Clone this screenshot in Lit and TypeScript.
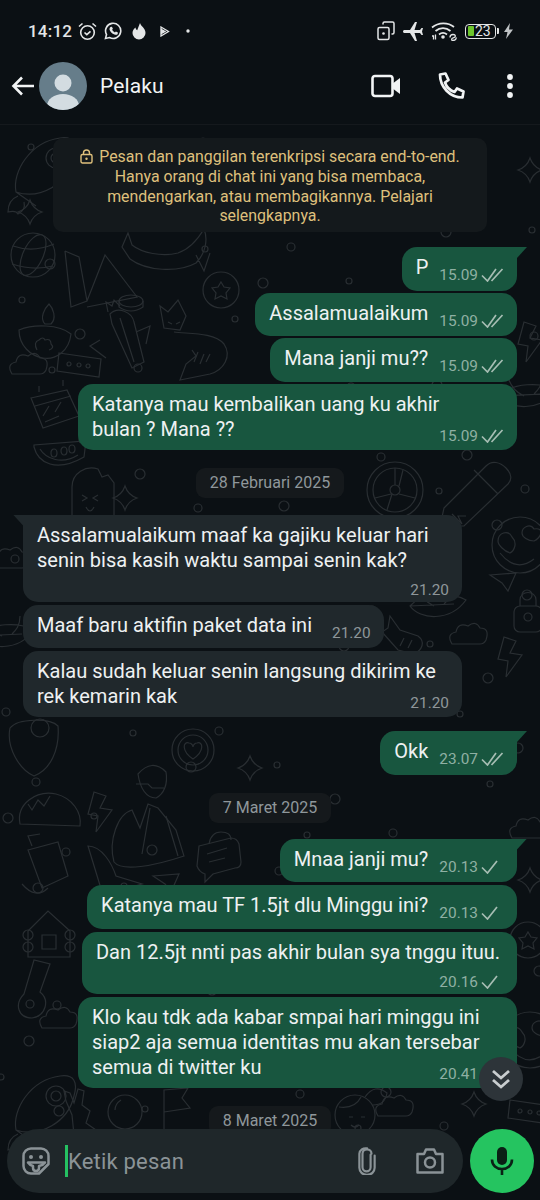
import { LitElement, html, css, svg } from 'lit';
import { customElement } from 'lit/decorators.js';

type Msg = {
  kind: 'msg';
  side: 'out' | 'in';
  lines: string[];
  time: string;
  ticks?: 1 | 2;
  layout: 'inline' | 'over' | 'stack';
  tail?: boolean;
  wide?: boolean;
  top: number;
};
type Day = { kind: 'day'; label: string; top: number };

const ITEMS: (Msg | Day)[] = [
  { kind: 'msg', side: 'out', lines: ['P'], time: '15.09', ticks: 2, layout: 'inline', tail: true, top: 15 },
  { kind: 'msg', side: 'out', lines: ['Assalamualaikum'], time: '15.09', ticks: 2, layout: 'inline', top: 2 },
  { kind: 'msg', side: 'out', lines: ['Mana janji mu??'], time: '15.09', ticks: 2, layout: 'inline', top: 2 },
  { kind: 'msg', side: 'out', lines: ['Katanya mau kembalikan uang ku akhir', 'bulan ? Mana ??'], time: '15.09', ticks: 2, layout: 'over', wide: true, top: 2 },
  { kind: 'day', label: '28 Februari 2025', top: 18 },
  { kind: 'msg', side: 'in', lines: ['Assalamualaikum maaf ka gajiku keluar hari', 'senin bisa kasih waktu sampai senin kak?'], time: '21.20', layout: 'stack', tail: true, wide: true, top: 17 },
  { kind: 'msg', side: 'in', lines: ['Maaf baru aktifin paket data ini'], time: '21.20', layout: 'inline', top: 3 },
  { kind: 'msg', side: 'in', lines: ['Kalau sudah keluar senin langsung dikirim ke', 'rek kemarin kak'], time: '21.20', layout: 'over', wide: true, top: 3 },
  { kind: 'msg', side: 'out', lines: ['Okk'], time: '23.07', ticks: 2, layout: 'inline', tail: true, top: 14 },
  { kind: 'day', label: '7 Maret 2025', top: 18 },
  { kind: 'msg', side: 'out', lines: ['Mnaa janji mu?'], time: '20.13', ticks: 1, layout: 'inline', tail: true, top: 16 },
  { kind: 'msg', side: 'out', lines: ['Katanya mau TF 1.5jt dlu Minggu ini?'], time: '20.13', ticks: 1, layout: 'inline', top: 3 },
  { kind: 'msg', side: 'out', lines: ['Dan 12.5jt nnti pas akhir bulan sya tnggu ituu.'], time: '20.16', ticks: 1, layout: 'stack', top: 3 },
  { kind: 'msg', side: 'out', lines: ['Klo kau tdk ada kabar smpai hari minggu ini', 'siap2 aja semua identitas mu akan tersebar', 'semua di twitter ku'], time: '20.41', ticks: 1, layout: 'over', wide: true, top: 3 },
  { kind: 'day', label: '8 Maret 2025', top: 18 },
];

// wallpaper doodles, drawn around their own 0,0
const DOODLES: Record<string, ReturnType<typeof svg>> = {
  globe: svg`<circle r="22"/><ellipse rx="10" ry="22" transform="rotate(25)"/><path d="M-20-9Q0-2 21-11M-21 9Q0 16 20 11"/>`,
  whale: svg`<path d="M-48-8l6-14 4 12c10 8 30 12 46 8 12-4 20-14 26-24 4 10 2 24-8 34-18 10-50 8-66-4z M26 0l8 16 6-18"/>`,
  party: svg`<path d="M-30-34L-24 22-8 16 10-30 42 12-8 22M-8 16L-16-28-30-34"/><ellipse cx="36" cy="16" rx="12" ry="6"/><path d="M24 16v6q12 8 24 0v-6"/>`,
  coin: svg`<circle r="18"/><path d="M0-8l3 5 6 1-4 5 1 6-6-3-6 3 1-6-4-5 6-1z"/>`,
  fox: svg`<path d="M-30-24l8 6 10-12 8 16-6 14-16-2zM-16 2c14 2 40 0 50 12 8 12 0 26-14 30l-30 6 6-16 10-8-4-6"/><path d="M4 32l4-10M10 34l4-10M16 32l4-8M-22-8l4 2M-10-8l-4 2"/>`,
  diya: svg`<path d="M-26-8c14-6 40-6 52 4-2 18-16 26-28 24C-14 18-26 8-26-8z"/><path d="M0-14c-6-6 0-16 4-20 4 4 8 14 2 20zM-8 12q-4-8 2-10 4-4 6 0 6-2 6 4 4 4-2 6"/>`,
  cactus: svg`<path d="M-12-28c8-8 22-2 24 8l10 40-12 6-20-44zM-22-2l-10 6 16 12M14-10l14-6-4 18"/><path d="M-2-24l14 44M-14-30l-2-10 6 4 2-6 6 6"/>`,
  box: svg`<path d="M-20-12l42 6-2 18-42-6z"/><circle cx="-10" cy="-1" r="2"/><circle cx="0" cy="0" r="2"/><circle cx="9" cy="1" r="2"/>`,
  cloud: svg`<path d="M-18 8q-6-10 4-12 2-10 12-6 8-6 12 2 10 0 6 12-2 4-6 4h-24q-2 0-4 0z"/>`,
  calendar: svg`<path d="M-24-14l36-8 12 26-36 12zM-16-20v-6M8-26v-6M-20-6l36-10"/><path d="M-12 4l6-10M0 0l6-10M-10 10l14-6"/>`,
  melon: svg`<path d="M-26-8c4 16 22 26 50 10l2-16-52 4z"/><path d="M-20-6c6 10 22 16 38 6"/><ellipse cx="-6" cy="-2" rx="3" ry="4"/><ellipse cx="4" cy="-4" rx="3" ry="4"/><ellipse cx="12" cy="-6" rx="3" ry="4"/>`,
  ghost: svg`<path d="M-20 40V-8c0-14 14-22 26-18l4 8 6-2 6 8v46"/><path d="M-10 0l5 3-5 3M6 0l-5 3 5 3M-6 12q4 8 8 0"/>`,
  star: svg`<path d="M0-12q3 9 12 12-9 3-12 12-3-9-12-12 9-3 12-12z"/>`,
  wheel: svg`<circle r="28"/><circle r="22"/><circle r="5"/><path d="M0-22v17M-20 8l16-4M20 8l-16-4M-8 20l5-16M8-20l-4 16"/>`,
  pencil: svg`<path d="M-34 20l42-42c6-6 14-4 20 2s6 12 2 16l-44 42-24 0z M-4-18l24 24M-26 26l10 10-4-8 8 0"/>`,
  smiley: svg`<circle r="28"/><path d="M-20 8q16 20 34 6"/><path d="M-8-8c-4-8-14-4-14 4 0 4 6 10 12 12 4-2 8-10 2-16zM14-16c-4-6-12-2-12 4 0 4 6 8 12 8 6-2 12-14 0-12z"/>`,
  bolt: svg`<path d="M-6-18l12 4-6 12 12 2-16 22 2-16-10-2z"/>`,
  lock: svg`<rect x="-14" y="-6" width="28" height="26" rx="6"/><path d="M-8-6v-6c0-10 16-10 16 0v6"/><circle cy="5" r="4"/>`,
  plane: svg`<path d="M-12-6l26-2-8 18-6-8z"/>`,
  leaf: svg`<path d="M-28-4c10 14 40 16 56-6-14-8-44-8-56 6zM-28-4l44-2M-20-22c4 10 8 14 16 18M14-24c0 10-4 14-8 18"/>`,
  hand: svg`<path d="M-18-24l10 14 18 6c8 6 4 14-4 18l-16-4-16-18 6-4z M-4-2l-4 8M4 0l-4 8"/>`,
  rocket: svg`<path d="M-26 22c-4-20 14-50 44-54 14-2 18 6 14 20-6 26-34 42-58 34zM-26 22l20 14"/><circle cx="14" cy="-12" r="10"/><circle cx="14" cy="-12" r="5"/><path d="M-24 26q-10 4-10 16 8-2 10 2 8-4 6-12"/>`,
  shield: svg`<path d="M-24-24c8-10 40-10 48-2 2 24-8 44-24 50-14-6-28-28-24-48z"/><circle cx="6" cy="-24" r="9"/>`,
  taco: svg`<path d="M-30 14c-4-20 16-34 36-30 16 4 26 18 24 32zM-30 14l60 2"/><path d="M-22-6l4 6 6-10 6 6 6-10"/>`,
  bag: svg`<path d="M-22-12l30-8 10 34-26 12zM-18-16l-4-10 12-2M-28 22q14 16 26 4"/>`,
  jet: svg`<path d="M-22-34c14 0 24 18 28 30l26 8-22 6-4 10 6 10-12-4-8-14z"/>`,
  chat: svg`<path d="M-16-12l32-8q6 0 8 6l2 18q0 6-6 6l-22 6-8 8 0-8q-6-2-8-8z"/><path d="M-8-4l20-6M-6 4l16-4M-6-14q2-12 12-12t10 8"/>`,
  house: svg`<path d="M-22-4L-2-24 20-4M-22-4v26h42V-4M-8 0h14v14H-8z"/><circle cx="-22" cy="0" r="5"/><circle cx="-22" cy="12" r="5"/><circle cx="20" cy="0" r="5"/><circle cx="20" cy="12" r="5"/>`,
  guitar: svg`<path d="M14-26L4 2c10 8 6 24-8 26-14 0-18-14-8-24l10-34z"/><circle cx="-6" cy="14" r="4"/>`,
  heart: svg`<circle r="21"/><circle r="15"/><path d="M0 9c-12-8-10-18-4-16 2 0 4 2 4 4 0-2 2-4 4-4 6-2 8 8-4 16z"/>`,
  man: svg`<path d="M-12-26q14-16 28-2c2 12-2 22-10 26-10 0-16-10-18-24zM-18 10c-14 4-24 30-18 52 8 10 40 4 70-6l-8-26-18-22-10-4-8 24zM-14-16h12l4 4h12"/><path d="M0 8l-8 46M16 16l12 40"/>`,
  ball: svg`<circle r="17"/><path d="M-4-12q-6 4-6 10"/>`,
  flag: svg`<path d="M-14 22V-22l24-2-6 10 8 10-26 4"/>`,
  peace: svg`<path d="M-10 30l-2-20-6-14-2-10 6 2 4 10 4-14 6 2-2 14 8 6-4 12 20 14"/>`,
  lady: svg`<circle r="20"/><path d="M-16-8q16 2 22-10M10-18q10-14 22-4-2 12-14 12M-6 2h4M6 2h4M-4 10q4 4 8 0"/>`,
};

const PLACED: [string, number, number][] = [
  ['rocket', 42, 170], ['star', 30, 212], ['globe', 33, 255], ['whale', 170, 255], ['party', 95, 285], ['coin', 221, 290],
  ['fox', 190, 330], ['diya', 45, 338], ['cactus', 122, 342], ['box', 79, 365], ['cloud', 30, 366], ['calendar', 55, 412],
  ['melon', 60, 455], ['ghost', 92, 495], ['star', 125, 498], ['wheel', 395, 490], ['pencil', 478, 488], ['smiley', 520, 545],
  ['plane', 502, 581], ['cloud', 470, 636], ['leaf', 438, 610], ['hand', 408, 640], ['bolt', 510, 655], ['lock', 528, 612],
  ['shield', 34, 752], ['heart', 193, 750], ['man', 150, 800], ['taco', 50, 810], ['bolt', 100, 810], ['star', 250, 768],
  ['bag', 50, 862], ['jet', 110, 880], ['chat', 215, 858], ['plane', 165, 882], ['house', 50, 935], ['guitar', 36, 990],
  ['rocket', 42, 1108], ['peace', 84, 1105], ['ball', 125, 1112], ['flag', 178, 1112], ['lady', 355, 1115], ['star', 474, 1104],
  ['cloud', 396, 1108], ['box', 530, 1112], ['bolt', 530, 340], ['leaf', 528, 400], ['star', 530, 880], ['cloud', 530, 830],
  ['coin', 528, 940], ['cloud', 12, 560], ['leaf', 6, 640], ['star', 530, 170], ['cloud', 60, 1020], ['smiley', 530, 1040],
];

// small rings scattered between the doodles
const RINGS = Array.from({ length: 120 }, (_, i) => ({
  x: (i * 197 + 31) % 540,
  y: 130 + ((i * 431 + 17) % 1000),
  r: 3 + (i % 3),
}));

const Ticks = (n?: 1 | 2) => {
  if (n === 2) {
    return html`<svg class="ticks" viewBox="0 0 23 14"><path d="M1 7.500l5.500 5.500L15 1M10.500 13L21.500 1"/></svg>`;
  }
  if (n === 1) {
    return html`<svg class="ticks" viewBox="0 0 23 14"><path d="M1 7.500l5.500 5.500L16 1"/></svg>`;
  }
  return '';
};

@customElement('app-root')
export class AppRoot extends LitElement {
  static styles = css`
    :host {
      display: block;
      width: 540px;
      height: 1200px;
      position: relative;
      overflow: hidden;
      background: #0b1014;
      font-family: Roboto, "Noto Sans", sans-serif;
      color: #e9edef;
    }
    .status {
      height: 62px;
      box-sizing: border-box;
      padding: 0 26px 0 28px;
      display: flex;
      align-items: center;
      gap: 4px;
      color: #e4e6e7;
    }
    .status .clock {
      font-size: 17px;
      font-weight: 500;
      letter-spacing: 0.2px;
      margin-right: 2px;
    }
    .status svg { display: block; flex: none; }
    .spacer { flex: 1; }
    .battery {
      width: 31px;
      height: 15px;
      margin-left: 3px;
      box-sizing: border-box;
      border: 1.3px solid #e4e6e7;
      border-radius: 4px;
      display: flex;
      align-items: center;
      padding-left: 2px;
      font-size: 14px;
      line-height: 1;
      gap: 1px;
    }
    .battery i {
      width: 6px;
      height: 10px;
      background: #6cc52c;
      border-radius: 1px;
    }
    .cap {
      width: 2px;
      height: 6px;
      background: #e4e6e7;
      margin-left: -3px;
      border-radius: 0 1px 1px 0;
    }
    .header {
      height: 62px;
      box-sizing: border-box;
      display: flex;
      align-items: center;
      padding: 0 0 14px 11px;
      color: #f2f4f5;
    }
    .header .name {
      font-size: 21px;
      margin-left: 13px;
      flex: 1;
      letter-spacing: 0.1px;
    }
    .header svg { display: block; flex: none; }
    .avatar { margin-left: 4px; }
    .chat {
      position: relative;
      height: 1076px;
      overflow: hidden;
      border-top: 1px solid #15191d;
      box-sizing: border-box;
    }
    .wall {
      position: absolute;
      left: 0;
      top: -125px;
      width: 540px;
      height: 1200px;
      fill: none;
      stroke: #292e32;
      stroke-width: 1.2;
    }
    .list {
      position: relative;
      display: flex;
      flex-direction: column;
      padding: 13px 23px 0;
    }
    .notice {
      box-sizing: border-box;
      width: 434px;
      height: 94px;
      align-self: center;
      background: #14191c;
      border-radius: 10px;
      color: #dfc07c;
      font-size: 15.9px;
      line-height: 19.8px;
      text-align: center;
      padding: 9px 0;
    }
    .notice svg {
      display: inline-block;
      vertical-align: -2px;
      margin-right: 6px;
    }
    .day {
      align-self: center;
      height: 30px;
      box-sizing: border-box;
      padding: 0 14px;
      display: flex;
      align-items: center;
      background: #15191c;
      border-radius: 9px;
      color: #8f979b;
      font-size: 16px;
    }
    .msg {
      position: relative;
      box-sizing: border-box;
      display: grid;
      grid-template-columns: 1fr auto;
      border-radius: 15px;
      padding: 8px 13px 8px 14px;
      font-size: 20px;
      line-height: 25px;
      color: #eef1f2;
    }
    .out { align-self: flex-end; background: #18563f; }
    .in { align-self: flex-start; background: #20282c; }
    .wide { width: 439px; }
    .text { white-space: nowrap; }
    .meta {
      display: flex;
      align-items: center;
      gap: 3px;
      height: 18px;
      font-size: 15.4px;
      line-height: 18px;
      justify-self: end;
    }
    .out .meta { color: #8fb0a3; }
    .in .meta { color: #8e9699; }
    .ticks {
      width: 23px;
      height: 14px;
      fill: none;
      stroke: #a6bdb3;
      stroke-width: 1.7;
    }
    .inline { padding-bottom: 10.500px; column-gap: 11px; }
    .in.inline { column-gap: 20px; }
    .inline .meta { align-self: end; margin-bottom: -4px; }
    .over .text, .over .meta { grid-area: 1 / 1; }
    .over { padding-bottom: 8px; }
    .over .meta { align-self: end; margin-bottom: -3px; }
    .stack { padding-bottom: 3px; }
    .stack .text, .stack .meta { grid-column: 1 / 3; }
    .stack .meta { margin-top: 8px; }
    .out.stack { padding-right: 17px; }
    .out.stack .meta { margin-right: -4px; }
    .tail.out { border-top-right-radius: 0; }
    .tail.in { border-top-left-radius: 0; }
    .tail::after {
      content: '';
      position: absolute;
      top: 0;
      width: 10px;
      height: 11px;
      background: inherit;
    }
    .tail.out::after { right: -10px; clip-path: polygon(0 0, 100% 0, 0 100%); }
    .tail.in::after { left: -10px; clip-path: polygon(0 0, 100% 0, 100% 100%); }
    .down {
      position: absolute;
      left: 479px;
      top: 1057px;
      width: 44px;
      height: 44px;
      border-radius: 50%;
      background: #2d3439;
      display: flex;
      align-items: center;
      justify-content: center;
    }
    .bottom {
      position: absolute;
      left: 7px;
      right: 6px;
      top: 1129px;
      display: flex;
      gap: 7px;
    }
    .input {
      flex: 1;
      height: 64px;
      border-radius: 32px;
      background: #1f272a;
      display: flex;
      align-items: center;
      padding-left: 15px;
      color: #8b9397;
      font-size: 22px;
    }
    .input svg { display: block; flex: none; }
    .caret {
      width: 3px;
      height: 32px;
      background: #25c162;
      margin-left: 15px;
    }
    .placeholder { flex: 1; letter-spacing: 0.2px; }
    .clip { margin-right: 40px; }
    .cam { margin-right: 19px; }
    .mic {
      width: 64px;
      height: 64px;
      flex: none;
      border-radius: 50%;
      background: #25c460;
      display: flex;
      align-items: center;
      justify-content: center;
    }
  `;

  private renderStatus() {
    return html`
      <div class="status">
        <span class="clock">14:12</span>
        <svg width="19" height="19" viewBox="0 0 19 19" fill="none" stroke="#e4e6e7" stroke-width="1.6">
          <circle cx="9.5" cy="10.5" r="6.8"/><path d="M1 4.5L4.5 1.5M18 4.5L14.5 1.5M6.5 10.5l2.3 2.2 3.7-3.4"/>
        </svg>
        <svg style="margin-left:3px" width="18" height="18" viewBox="0 0 18 18" fill="none" stroke="#e4e6e7" stroke-width="1.6">
          <path d="M1.5 16.5l1-4A7.6 7.6 0 1 1 5.5 15.5z"/>
          <path fill="#e4e6e7" stroke="none" d="M6.5 5l1.4-.2 1 2-.8 1c.6 1.2 1.5 2 2.8 2.6l1-.9 2 1-.2 1.4c-.6.9-2 1-3.200.6-2.500-.8-4.500-2.800-5-5 0-1 .3-2 1-2.500z"/>
        </svg>
        <svg style="margin-left:5px" width="16" height="18" viewBox="0 0 16 18" fill="#e4e6e7">
          <path d="M9 1c.6 3 5.500 5 5.500 10A6.500 6.500 0 0 1 8 17.500 6.500 6.500 0 0 1 1.500 11c0-2.500 1.500-4.500 3-5.500.2 1.500.8 2.300 1.700 2.700C7 6 8 3.500 9 1z"/>
        </svg>
        <svg style="margin-left:9px" width="10" height="11" viewBox="0 0 10 11" fill="none" stroke="#e4e6e7" stroke-width="1.300">
          <path d="M1 1l7.500 4.500L1 10z"/><path d="M1.500 3.500l3.500 2-3.500 2z" fill="#e4e6e7"/>
        </svg>
        <svg style="margin-left:12px" width="4" height="4"><circle cx="2" cy="2" r="1.700" fill="#e4e6e7"/></svg>
        <span class="spacer"></span>
        <svg width="18" height="20" viewBox="0 0 18 20" fill="none" stroke="#e4e6e7" stroke-width="1.500">
          <rect x="1" y="6.500" width="11" height="12" rx="1.500"/><path d="M6 3.500V2.500q0-1.500 1.500-1.500h8q1.500 0 1.500 1.500v9q0 1.500-1.500 1.500h-1"/>
          <circle cx="6.500" cy="12.500" r="1.300" fill="#e4e6e7" stroke="none"/>
        </svg>
        <svg style="margin-left:2px" width="24" height="24" viewBox="0 0 24 24" fill="#e4e6e7">
          <path transform="rotate(-90 12 12)" d="M21 16v-2l-8-5V3.500c0-.83-.67-1.500-1.500-1.500S10 2.670 10 3.500V9l-8 5v2l8-2.500V19l-2 1.500V22l3.500-1 3.500 1v-1.500L13 19v-5.500l8 2.500z"/>
        </svg>
        <svg style="margin-left:2px" width="27" height="20" viewBox="0 0 27 20" fill="none" stroke="#e4e6e7" stroke-width="1.700">
          <path d="M1 6.500C7.500 1 17 1 23 6M4.500 10c4.500-3.800 10.500-3.800 15 0M8 13.500c2.500-2 5.500-2 8 0"/>
          <circle cx="12" cy="16" r="1.800" fill="#e4e6e7" stroke="none"/>
          <path stroke-width="1.300" d="M1 15h1.500v3.500M4.500 13.500v5M19 16.500q0-3 3-3t2 2.500l-3 1.500q-1 2 1 2 3 0 3.500-3"/>
        </svg>
        <div class="battery"><i></i><span>23</span></div>
        <span class="cap"></span>
        <svg width="11" height="16" viewBox="0 0 11 16" fill="#bfc3c5">
          <path d="M7 0L1 9h3.500L3 16l7-9.500H6z"/>
        </svg>
      </div>
    `;
  }

  private renderHeader() {
    return html`
      <div class="header">
        <svg width="24" height="24" viewBox="0 0 24 24" fill="none" stroke="#f2f4f5" stroke-width="2.600">
          <path d="M23 12H3M11 3.500L2.500 12l8.500 8.500"/>
        </svg>
        <svg class="avatar" width="48" height="48" viewBox="0 0 48 48">
          <clipPath id="av"><circle cx="24" cy="24" r="24"/></clipPath>
          <circle cx="24" cy="24" r="24" fill="#667d8a"/>
          <g clip-path="url(#av)" fill="#d3dce1">
            <circle cx="24" cy="21" r="8.500"/>
            <ellipse cx="24" cy="44" rx="16" ry="12"/>
          </g>
        </svg>
        <span class="name">Pelaku</span>
        <svg style="margin-right:36px" width="30" height="24" viewBox="0 0 30 24" fill="none" stroke="#f2f4f5" stroke-width="2.600">
          <rect x="1.500" y="2" width="20" height="20" rx="2.500"/>
          <path fill="#f2f4f5" stroke="none" d="M21 10l8-6v16l-8-6z"/>
        </svg>
        <svg style="margin-right:42px" width="28" height="28" viewBox="0 0 28 28" fill="none" stroke="#f2f4f5" stroke-width="2.700" stroke-linejoin="round">
          <path d="M3 2.500L8.500 1.500 11.500 8 8 10.500C9.500 15 13 18.500 17.500 20L20 16.500 26.500 19.500 25.500 25.500C13 25.500 3 15 3 2.500z"/>
        </svg>
        <svg style="margin-right:27px" width="6" height="24" viewBox="0 0 6 24" fill="#f2f4f5">
          <circle cx="3" cy="3" r="2.900"/><circle cx="3" cy="12" r="2.900"/><circle cx="3" cy="21" r="2.900"/>
        </svg>
      </div>
    `;
  }

  private renderItem(it: Msg | Day) {
    if (it.kind === 'day') {
      return html`<div class="day" style="margin-top:${it.top}px">${it.label}</div>`;
    }
    const cls = `msg ${it.side} ${it.layout} ${it.tail ? 'tail' : ''} ${it.wide ? 'wide' : ''}`;
    return html`
      <div class=${cls} style="margin-top:${it.top}px">
        <div class="text">${it.lines.map((l, i) => html`${i ? html`<br />` : ''}${l}`)}</div>
        <div class="meta"><span>${it.time}</span>${Ticks(it.ticks)}</div>
      </div>
    `;
  }

  render() {
    return html`
      ${this.renderStatus()}
      ${this.renderHeader()}
      <div class="chat">
        <svg class="wall" viewBox="0 0 540 1200">
          ${PLACED.map(([name, x, y]) => svg`<g transform="translate(${x} ${y})">${DOODLES[name]}</g>`)}
          ${RINGS.map((c) => svg`<circle cx=${c.x} cy=${c.y} r=${c.r}/>`)}
        </svg>
        <div class="list">
          <div class="notice">
            <svg width="13" height="15" viewBox="0 0 13 15" fill="none" stroke="#dfc07c" stroke-width="1.400">
              <rect x="1" y="5.500" width="11" height="8.500" rx="1.500"/><path d="M3.500 5.500V4q0-3 3-3t3 3v1.500"/>
              <circle cx="6.500" cy="9.700" r="1.200" fill="#dfc07c" stroke="none"/>
            </svg>Pesan dan panggilan terenkripsi secara end-to-end.<br />Hanya orang di chat ini yang bisa membaca,<br />mendengarkan, atau membagikannya. Pelajari<br />selengkapnya.
          </div>
          ${ITEMS.map((it) => this.renderItem(it))}
        </div>
      </div>
      <div class="down">
        <svg width="20" height="22" viewBox="0 0 20 22" fill="none" stroke="#c9cdcf" stroke-width="2.800">
          <path d="M2 3l8 7 8-7M2 12l8 7 8-7"/>
        </svg>
      </div>
      <div class="bottom">
        <div class="input">
          <svg width="28" height="28" viewBox="0 0 28 28" fill="none" stroke="#8b9397" stroke-width="2.500" stroke-linejoin="round">
            <path d="M9 1.500h10A7.500 7.500 0 0 1 26.500 9v8L17 26.500H9A7.500 7.500 0 0 1 1.500 19V9A7.500 7.500 0 0 1 9 1.500z"/>
            <circle cx="9" cy="10" r="2" fill="#8b9397" stroke="none"/>
            <circle cx="19" cy="10" r="2" fill="#8b9397" stroke="none"/>
            <path d="M6 15.500h17c-1 1.500-3 3-6 3.500v2q0 3-3 3t-3-3v-2c-2-.5-4-2-5-3.500z"/>
          </svg>
          <span class="caret"></span>
          <span class="placeholder">Ketik pesan</span>
          <svg class="clip" width="18" height="28" viewBox="0 0 20 30" fill="none" stroke="#8b9397" stroke-width="2.400" stroke-linecap="round">
            <path d="M14 8v14a4.500 4.500 0 0 1-9 0V7a5 5 0 0 1 10 0 M18.500 9v13.500a8.500 8 0 0 1-17 0V7A7 6.500 0 0 1 10 1"/>
          </svg>
          <svg class="cam" width="28" height="26" viewBox="0 0 28 26" fill="none" stroke="#8b9397" stroke-width="2.500" stroke-linejoin="round">
            <path d="M1.500 6h6.500l2-4.500h8l2 4.500h6.500v18.500h-25z"/>
            <circle cx="14" cy="14.500" r="5"/>
          </svg>
        </div>
        <div class="mic">
          <svg width="24" height="28" viewBox="0 0 24 28" fill="none" stroke="#0a2015" stroke-width="2.600">
            <rect x="7" y="0" width="10" height="18" rx="5" fill="#0a2015" stroke="none"/>
            <path d="M2 12.500c0 6 4.500 9.500 10 9.500s10-3.500 10-9.500M12 22v6"/>
          </svg>
        </div>
      </div>
    `;
  }
}
